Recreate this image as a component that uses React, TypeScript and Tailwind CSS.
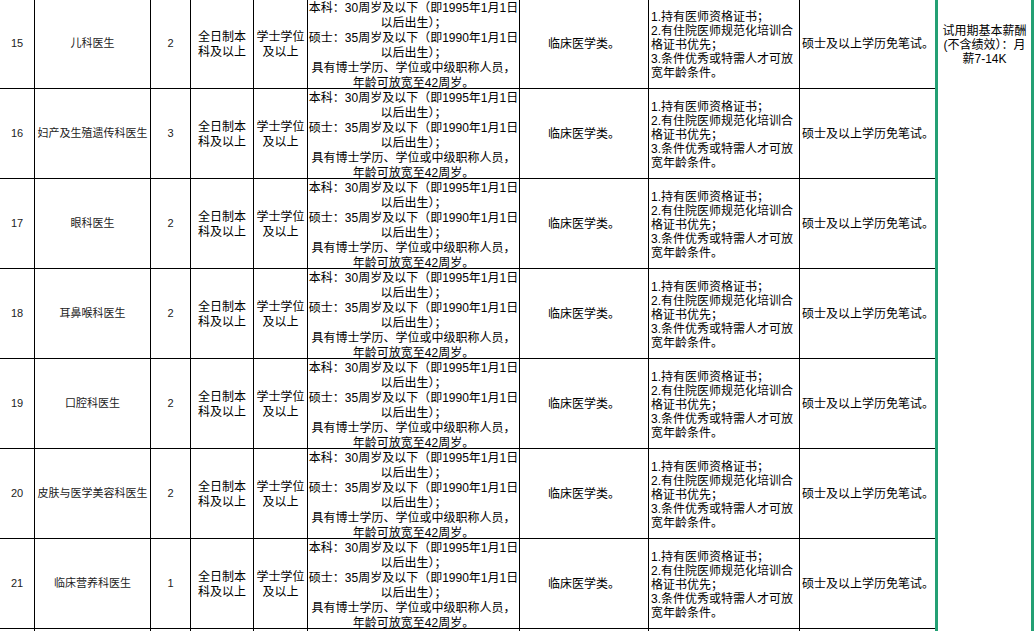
const rows = [
  { no: "15", name: "儿科医生", count: "2" },
  { no: "16", name: "妇产及生殖遗传科医生", count: "3" },
  { no: "17", name: "眼科医生", count: "2" },
  { no: "18", name: "耳鼻喉科医生", count: "2" },
  { no: "19", name: "口腔科医生", count: "2" },
  { no: "20", name: "皮肤与医学美容科医生", count: "2" },
  { no: "21", name: "临床营养科医生", count: "1" },
];

const ageLines = [
  "本科：30周岁及以下（即1995年1月1日",
  "以后出生）；",
  "硕士：35周岁及以下（即1990年1月1日",
  "以后出生）；",
  "具有博士学历、学位或中级职称人员，",
  "年龄可放宽至42周岁。",
];

const otherLines = [
  "1.持有医师资格证书；",
  "2.有住院医师规范化培训合",
  "格证书优先；",
  "3.条件优秀或特需人才可放",
  "宽年龄条件。",
];

const font = "font-['Liberation_Sans','Noto_Sans_CJK_SC',sans-serif]";
const cell = "border-r border-black flex items-center overflow-hidden";

function Row({ no, name, count }: { no: string; name: string; count: string }) {
  return (
    <div className="grid h-[90px] grid-cols-[35px_116px_40px_63px_54px_212px_129px_151px_135px] border-b border-black">
      <div className={`${cell} justify-center text-[11px] text-[#222]`}>{no}</div>
      <div className={`${cell} justify-center text-[11px] text-[#222] whitespace-nowrap`}>{name}</div>
      <div className={`${cell} justify-center text-[11px] text-[#222]`}>{count}</div>
      <div className={`${cell} justify-center text-center text-[12px] leading-[15px]`}>
        <div className="pt-[2px]">
          全日制本
          <br />
          科及以上
        </div>
      </div>
      <div className={`${cell} justify-center text-center text-[12px] leading-[15px]`}>
        <div className="pt-[2px]">
          学士学位
          <br />
          及以上
        </div>
      </div>
      <div className="flex items-start justify-center overflow-hidden border-r border-black pt-[2px] text-center text-[12px] leading-[15px]">
        <div className="whitespace-nowrap">
          {ageLines.map((l) => (
            <div key={l}>{l}</div>
          ))}
        </div>
      </div>
      <div className={`${cell} justify-center text-[12px]`}>临床医学类。</div>
      <div className={`${cell} pl-[2px] text-[12px] leading-[14px]`}>
        <div className="whitespace-nowrap pt-[3px]">
          {otherLines.map((l) => (
            <div key={l}>{l}</div>
          ))}
        </div>
      </div>
      <div className="flex items-center overflow-hidden pl-[2px] text-[12px] whitespace-nowrap">
        硕士及以上学历免笔试。
      </div>
    </div>
  );
}

export default function App() {
  return (
    <div className={`h-[631px] w-[1034px] overflow-hidden bg-white text-black ${font}`}>
      <div className="flex h-full">
        <div className="-mt-px w-[935px] shrink-0">
          {rows.map((r) => (
            <Row key={r.no} {...r} />
          ))}
          <div className="grid h-[20px] grid-cols-[35px_116px_40px_63px_54px_212px_129px_151px_135px]">
            {Array.from({ length: 8 }).map((_, i) => (
              <div key={i} className="border-r border-black" />
            ))}
            <div />
          </div>
        </div>
        <div className="h-full w-[99px] shrink-0 border-x-[3px] border-[#23a074] pt-[24px] text-center text-[12px] leading-[14px]">
          <div>试用期基本薪酬</div>
          <div className="whitespace-nowrap">(不含绩效）：月</div>
          <div>薪7-14K</div>
        </div>
      </div>
    </div>
  );
}
